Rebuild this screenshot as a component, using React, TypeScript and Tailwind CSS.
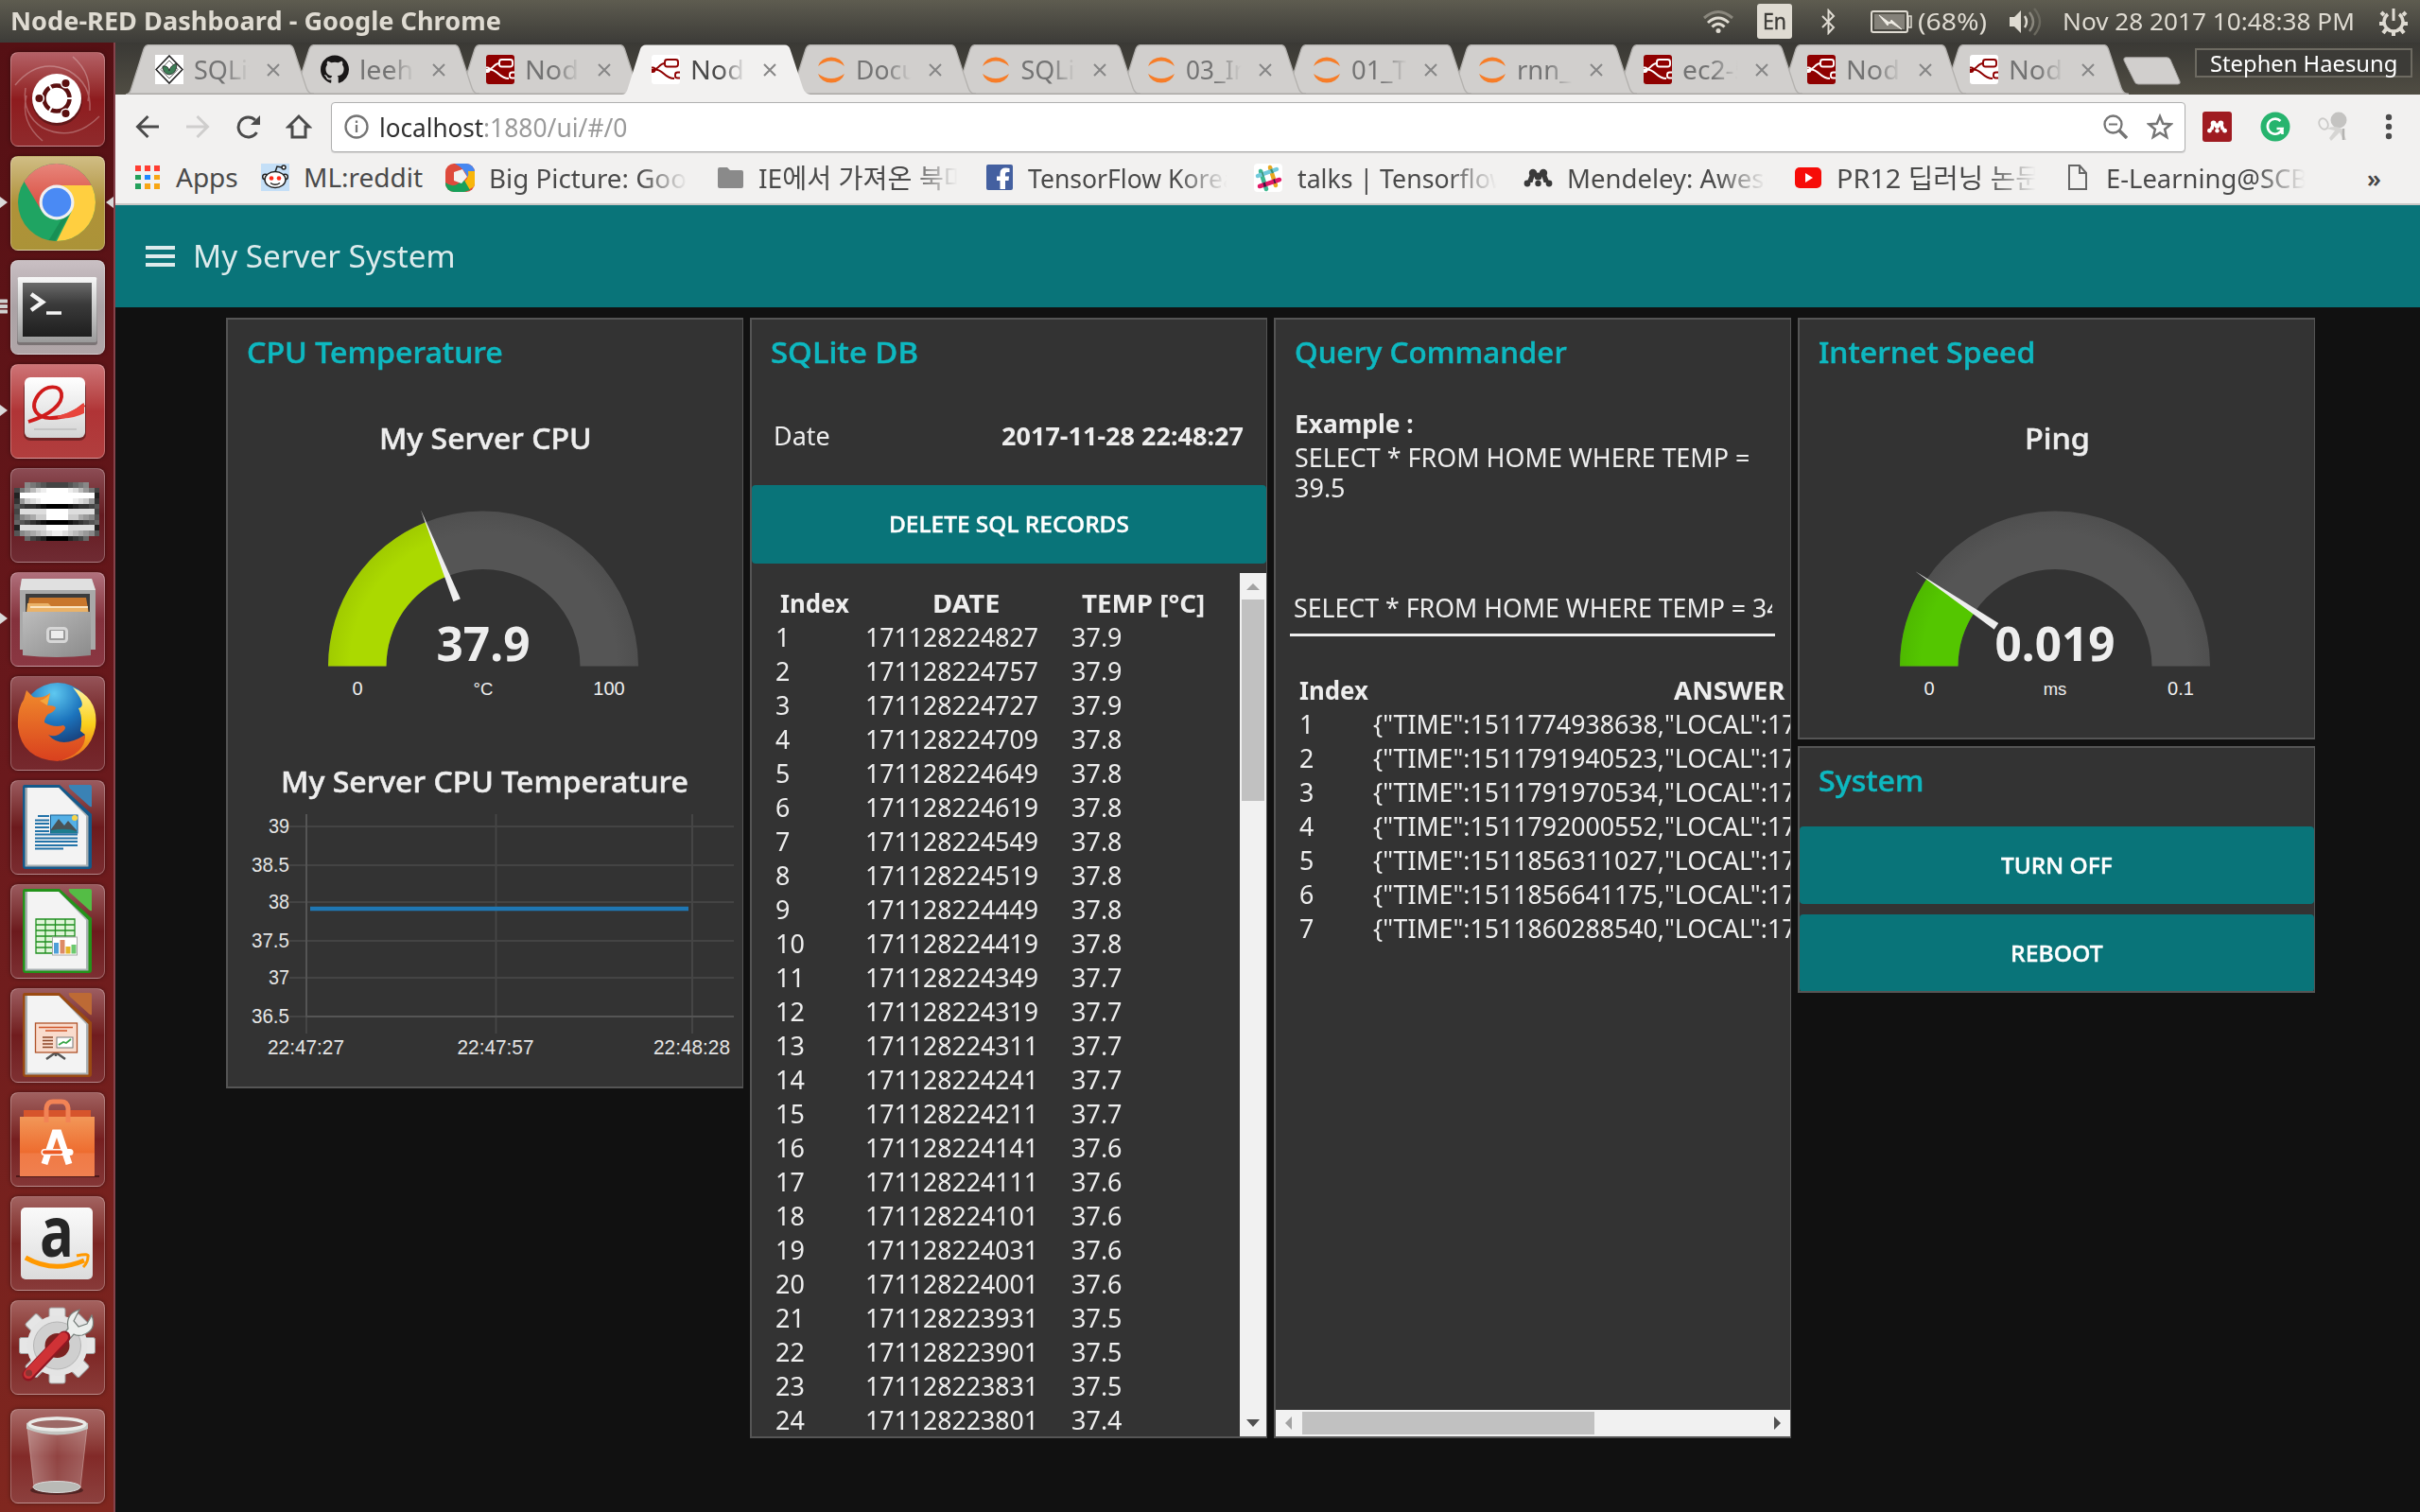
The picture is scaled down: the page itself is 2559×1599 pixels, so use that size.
import { useLayoutEffect, useRef, useState } from "react";
import type { ReactNode } from "react";

/* Single line of text condensed or widened to an exact advance width. */
function Fit({ w, className = "", children }: { w: number; className?: string; children: ReactNode }) {
  const ref = useRef<HTMLSpanElement>(null);
  const [scale, setScale] = useState(1);
  useLayoutEffect(() => {
    const el = ref.current;
    if (el && el.offsetWidth > 0) setScale(w / el.offsetWidth);
  }, [w]);
  return (
    <span className={`inline-block shrink-0 whitespace-nowrap text-left leading-tight ${className}`} style={{ width: w }}>
      <span ref={ref} className="inline-block origin-left" style={{ transform: `scaleX(${scale})` }}>
        {children}
      </span>
    </span>
  );
}

/* ---------- system panel ---------- */

function TopPanel() {
  return (
    <header className="flex h-[45px] shrink-0 items-center bg-linear-to-b from-[#5e5c50] to-[#3d3c38] pr-[13px] pl-[11px] text-[#dfdbd2]">
      <Fit w={519} className="text-[26px] font-bold">Node-RED Dashboard - Google Chrome</Fit>
      <svg className="ml-auto h-[26px] w-[34px]" viewBox="0 0 34 26" fill="none" stroke="#dfdbd2" strokeWidth="3">
        <path d="M2 9Q17 -4 32 9" stroke="#8a877d" />
        <path d="M6 14Q17 4 28 14" />
        <path d="M10.5 18.500Q17 12 23.500 18.500" />
        <circle cx="17" cy="22.500" r="2.500" fill="#dfdbd2" stroke="none" />
      </svg>
      <div className="ml-6 flex h-[37px] w-[37px] items-center justify-center rounded-[3px] bg-[#dfdbd2] text-[#3d3c38]">
        <Fit w={25} className="text-[23px] [-webkit-text-stroke:0.4px]">En</Fit>
      </div>
      <svg className="ml-[31px] h-[28px] w-[15px]" viewBox="0 0 15 28" fill="none" stroke="#dfdbd2" strokeWidth="2">
        <path d="M1 8L13 20L7.500 26V2L13 8L1 20" />
      </svg>
      <svg className="ml-[37px] h-[24px] w-[44px]" viewBox="0 0 44 24">
        <rect x="1" y="1" width="38" height="22" rx="2" fill="none" stroke="#dfdbd2" strokeWidth="2" />
        <rect x="4" y="4" width="32" height="16" fill="#85827a" />
        <path d="M40 6h3v12h-3z" fill="none" stroke="#dfdbd2" strokeWidth="1.500" />
        <path d="M9 5L21 14L22 10L33 20L20 12L18 16Z" fill="#f1eee6" stroke="#f1eee6" />
      </svg>
      <Fit w={73} className="ml-1.5 text-[26px]">(68%)</Fit>
      <svg className="ml-6 h-[32px] w-[35px]" viewBox="0 0 35 32" fill="none" strokeWidth="2.400">
        <path d="M0 11h5l7-7v24l-7-7H0z" fill="#dfdbd2" />
        <path d="M16 10q4 6 0 12" stroke="#dfdbd2" />
        <path d="M21 6q8 10 0 20" stroke="#8a877d" />
        <path d="M26 2q12 14 0 28" stroke="#6b695f" />
      </svg>
      <Fit w={309} className="ml-[21px] text-[26px]">Nov 28 2017 10:48:38 PM</Fit>
      <svg className="ml-[26px] h-[32px] w-[30px]" viewBox="0 0 30 32" fill="none" stroke="#dfdbd2">
        <path d="M9 8A10 10 0 1 0 21 8" strokeWidth="3.500" />
        <path d="M15 2V15" strokeWidth="3" />
        <path d="M5 9L2 6M25 9L28 6M4 18H0M26 18H30M7 24L4 28M23 24L26 28M15 26V31" strokeWidth="4" />
      </svg>
    </header>
  );
}

/* ---------- launcher ---------- */

function DashIcon() {
  return (
    <>
      <g fill="none" stroke="#ffffff" strokeOpacity=".28" strokeWidth="1.500">
        <path d="M5 35Q30 5 62 20Q86 34 84 62M66 5Q88 24 82 52" />
        <path d="M94 68Q66 96 34 80Q12 66 16 38M34 94Q10 74 17 46" />
      </g>
      <circle cx="49.500" cy="51.500" r="26.500" fill="#000000" opacity=".3" />
      <circle cx="49" cy="49" r="26" fill="#fff" />
      <circle cx="49" cy="49" r="13.500" fill="none" stroke="#5b1010" strokeWidth="4.500" />
      <path d="M49 49H68M49 49L39.500 32.500M49 49L39.500 65.500" stroke="#fff" strokeWidth="2.200" />
      <circle cx="49" cy="49" r="10.500" fill="#fff" />
      <g fill="#5b1010" stroke="#fff" strokeWidth="1.500">
        <circle cx="30.500" cy="49" r="4.800" />
        <circle cx="58.500" cy="33" r="4.800" />
        <circle cx="58.500" cy="65" r="4.800" />
      </g>
    </>
  );
}

function ChromeIcon() {
  return (
    <>
      <clipPath id="chromeDisc"><circle cx="49" cy="49" r="41" /></clipPath>
      <linearGradient id="chromeRed" x2="0" y2="1"><stop stopColor="#e98a80" /><stop offset="1" stopColor="#d74a3c" /></linearGradient>
      <g clipPath="url(#chromeDisc)">
        <rect x="8" y="8" width="82" height="82" fill="#1fa462" />
        <path d="M48 92L65 58L49 31H92V92Z" fill="#ffcf40" />
        <path d="M49 31H92V4H4L14.500 27L33 58Z" fill="url(#chromeRed)" />
        <path d="M62 62L46 92L40 90L54 67Z" fill="#0b6b3b" opacity=".35" />
      </g>
      <circle cx="49" cy="49" r="18.500" fill="#f0f0f0" />
      <circle cx="49" cy="49" r="15.300" fill="#4a8af4" />
    </>
  );
}

function TerminalIcon() {
  return (
    <>
      <linearGradient id="frame" x2="0" y2="1"><stop stopColor="#f7f7f7" /><stop offset="1" stopColor="#9a9a9a" /></linearGradient>
      <linearGradient id="screen" x2="0" y2="1"><stop stopColor="#6a6a6a" /><stop offset=".4" stopColor="#3a3a3a" /><stop offset="1" stopColor="#1e1e1e" /></linearGradient>
      <rect x="7" y="19" width="85" height="71" rx="3" opacity=".3" />
      <rect x="7.500" y="18" width="84" height="69" rx="2" fill="url(#frame)" />
      <rect x="13" y="24" width="73" height="57" fill="url(#screen)" />
      <path d="M22 36L34 44.500L22 53" fill="none" stroke="#f4f4f4" strokeWidth="4.500" />
      <path d="M38 56H54" stroke="#f4f4f4" strokeWidth="3.500" />
    </>
  );
}

function ReaderIcon() {
  return (
    <>
      <linearGradient id="paper" x2="0" y2="1"><stop stopColor="#fff" /><stop offset="1" stopColor="#d4d4d4" /></linearGradient>
      <rect x="14" y="18" width="66" height="63" rx="7" opacity=".35" />
      <rect x="15" y="14" width="64" height="64" rx="6" fill="url(#paper)" />
      <path d="M19 61C42 54 56 42 54 31C52 22 38 22 30 32C18 48 30 58 44 57C58 57 68 52 78 43" fill="none" stroke="#cf1b1b" strokeWidth="3.800" />
      <path d="M50 55Q68 50 78 41V52Q64 59 50 57Z" fill="#e8453c" />
      <path d="M25 69H70" stroke="#c4c4c4" strokeWidth="2" />
    </>
  );
}

const pixelRows = ["..876544", "479bdeff", "2fffffff", "39cdefff", "54332100", "4dddddff", "589accff", "65432100", "2dddddff", "589abcde", "..643200"];

function PixelIcon() {
  return (
    <g shapeRendering="crispEdges">
      {pixelRows.flatMap((row, y) =>
        (row + row.split("").reverse().join("")).split("").map((v, x) =>
          v === "." ? null : <rect key={`${x}-${y}`} x={4 + x * 5.65} y={15 + y * 5.65} width="5.700" height="5.700" fill={`#${v}${v}${v}`} />,
        ),
      )}
    </g>
  );
}

function FilesIcon() {
  return (
    <>
      <linearGradient id="drawer" x2="1" y2="1"><stop stopColor="#bcbcbc" /><stop offset="1" stopColor="#8b8b8b" /></linearGradient>
      <path d="M12 7H86L90 19V82H10V19Z" fill="#a9a9a9" />
      <path d="M12 7H86L90 19H10Z" fill="#e0e0e0" />
      <rect x="16" y="23" width="68" height="20" fill="#3c3c3c" />
      <path d="M20 27H80L83 44H17Z" fill="#c9772c" />
      <path d="M18 33H40L43 36H82V44H17Z" fill="#eab268" />
      <path d="M21 37H82" stroke="#fff3dc" strokeWidth="1.500" />
      <path d="M13 42H85V88Q49 92 13 88Z" fill="url(#drawer)" />
      <rect x="39.500" y="59.500" width="20" height="14" rx="3" fill="#9a9a9a" stroke="#d6d6d6" strokeWidth="3" />
      <rect x="43" y="62" width="13" height="8" fill="#ededed" />
    </>
  );
}

function FirefoxIcon() {
  return (
    <>
      <radialGradient id="globe" cx=".45" cy=".15" r=".9"><stop stopColor="#5ec8f0" /><stop offset=".45" stopColor="#1c74bd" /><stop offset="1" stopColor="#152458" /></radialGradient>
      <linearGradient id="fox" x2="0" y2="1"><stop stopColor="#f08a2c" /><stop offset="1" stopColor="#d9401e" /></linearGradient>
      <linearGradient id="tail" x2="0" y2="1"><stop stopColor="#fff3a0" /><stop offset=".5" stopColor="#fbd01b" /><stop offset="1" stopColor="#e8641e" /></linearGradient>
      <circle cx="50" cy="45" r="38" fill="url(#globe)" />
      <path d="M66 12Q94 24 90 54Q84 84 52 90Q78 76 79 62L74 58Q77 44 72 34Q82 32 66 12Z" fill="url(#tail)" />
      <path d="M17 15L24 22Q34 24 42 18L39 31Q48 31 48 34Q45 39 40 40Q36 44 36 49Q46 55 56 52Q60 54 56 58Q48 66 40 62Q54 78 79 62Q80 82 50 90Q12 88 8 54Q7 34 14 25Z" fill="url(#fox)" />
      <path d="M42 18L39 31L31 26Q38 24 42 18Z" fill="#f5a63c" />
    </>
  );
}

function DocIcon({ edge, light, children }: { edge: string; light: string; children: ReactNode }) {
  return (
    <>
      <path d="M15 5H52L86 36V91Q86 94 83 94H16Q13 94 13 91V8Q13 5 15 5Z" fill={edge} />
      <path d="M15.500 8H51L82.500 38V91.500H15.500Z" fill="#a9b0b3" />
      <path d="M18 8H51L80 38V89.500H18Z" fill="#f3f3f3" />
      <path d="M62 5H84Q86 5 86 7V28Q85 29 83 27L63 9Q61 6 62 5Z" fill={light} />
      {children}
    </>
  );
}

function WriterIcon() {
  return (
    <DocIcon edge="#14598a" light="#3a82b5">
      <path d="M29 38H41M26 42.500H41M26 46H41M26 50H41M26 54H41M26 57.500H71M26 61.500H71M26 65H71M26 69H71M26 72.500H56" stroke="#2273a8" strokeWidth="1.900" />
      <rect x="42.500" y="37" width="28.500" height="19" fill="#54b0e6" stroke="#155f94" />
      <path d="M43 52L51 41L57 48L61 43L70 53V56H43Z" fill="#4a5356" />
      <path d="M43 53Q60 50 70 54V56H43Z" fill="#1c7d8e" />
      <circle cx="68" cy="40" r="3" fill="#f8d347" />
    </DocIcon>
  );
}

function CalcIcon() {
  return (
    <DocIcon edge="#23931a" light="#54bd45">
      <rect x="27" y="37" width="41" height="36" fill="#dff5d8" />
      <path d="M27 37H68V73H27ZM27 43H68M27 49H68M27 55H68M27 61H68M27 67H68M37 37V73M47.500 37V73M58 37V73" fill="none" stroke="#1f8f1f" strokeWidth="1.300" />
      <rect x="44.500" y="56" width="26" height="19" fill="#fff" stroke="#a8a8a8" />
      <rect x="46" y="62" width="5" height="11.500" fill="#4f9fd8" />
      <rect x="52.500" y="59" width="5" height="14.500" fill="#dd8a66" />
      <rect x="58.500" y="66" width="5" height="7.500" fill="#e3b428" />
      <rect x="64.500" y="64" width="5" height="9.500" fill="#6cc96f" />
    </DocIcon>
  );
}

function ImpressIcon() {
  return (
    <DocIcon edge="#9a4a12" light="#bd6a35">
      <path d="M48 68L38 75M48 68L58 75M48 68V72" stroke="#555" strokeWidth="2.500" />
      <rect x="26.500" y="37" width="44" height="31" fill="#f9dccd" stroke="#b0532a" strokeWidth="1.300" />
      <path d="M30 41.500H66M37 45H60" stroke="#d0552a" strokeWidth="1.600" />
      <path d="M34 52H45M34 55.500H45M34 59H45M34 62.500H45" stroke="#8d4627" strokeWidth="1.300" />
      <rect x="49" y="52" width="17" height="11" fill="#fff" stroke="#777" />
      <path d="M51 60L56 57L59 58L64 54" fill="none" stroke="#3aa648" strokeWidth="1.800" />
    </DocIcon>
  );
}

function SoftwareIcon() {
  return (
    <>
      <linearGradient id="bag" x2="0" y2="1"><stop stopColor="#f29758" /><stop offset=".6" stopColor="#ee6c2f" /><stop offset=".62" stopColor="#f07a45" /><stop offset="1" stopColor="#f08050" /></linearGradient>
      <path d="M6 89H94" stroke="#2a0808" strokeWidth="2" opacity=".6" />
      <path d="M14 19H85V28H14Z" fill="#d6552c" />
      <rect x="10" y="26" width="79" height="63" fill="url(#bag)" />
      <path d="M38 32V17Q39 10 45 10H54Q60 10 61 17V32" fill="none" stroke="#f28355" strokeWidth="5" />
      <g fill="none" stroke="#fff" strokeWidth="7">
        <path d="M36 76L47 43H51L62 76" />
        <path d="M36 63.500H63" strokeLinecap="round" />
      </g>
      <path d="M36 63.500H53" stroke="#ec5a24" strokeWidth="4" strokeLinecap="round" />
    </>
  );
}

function AmazonIcon() {
  return (
    <>
      <linearGradient id="amz" x2="0" y2="1"><stop stopColor="#fafafa" /><stop offset="1" stopColor="#dcdcdc" /></linearGradient>
      <rect x="11" y="12" width="76" height="76" rx="5" fill="url(#amz)" />
      <text x="49" y="64" textAnchor="middle" fontFamily="Open Sans" fontWeight="700" fontSize="74" fill="#262626" textLength="36" lengthAdjust="spacingAndGlyphs">a</text>
      <path d="M16 65Q46 82 78 68" fill="none" stroke="#ff9900" strokeWidth="5" />
      <path d="M70 63Q84 60 82 64Q82 70 77 75" fill="none" stroke="#ff9900" strokeWidth="3" />
    </>
  );
}

function SettingsIcon() {
  return (
    <>
      <g fill="#e6e6e6" stroke="#9c9c9c">
        {[0, 45, 90, 135].map((a) => (
          <rect key={a} x="41" y="8" width="17" height="80" rx="2" transform={`rotate(${a} 49.500 48)`} />
        ))}
      </g>
      <circle cx="49.500" cy="48" r="32" fill="#e4e4e4" />
      <circle cx="49.500" cy="48" r="25" fill="#cfcfcf" stroke="#b5b5b5" />
      <circle cx="49.500" cy="48" r="13" fill="#7b2220" />
      <path d="M54 38L61 30Q58 14 73 10L67 22L72 28L81 25L86 16Q92 32 76 37Q70 38 67 36L60 44Z" fill="#ecefed" stroke="#77807c" strokeWidth="1.200" />
      <path d="M57 39L19 79" stroke="#8f1622" strokeWidth="13" strokeLinecap="round" />
      <path d="M56 39L19 78" stroke="#cf3236" strokeWidth="10" strokeLinecap="round" />
      <circle cx="19.500" cy="77" r="3.500" fill="#8a3432" />
    </>
  );
}

function TrashIcon() {
  return (
    <>
      <linearGradient id="bin"><stop stopColor="#fff" stopOpacity=".35" /><stop offset=".5" stopColor="#fff" stopOpacity=".12" /><stop offset="1" stopColor="#fff" stopOpacity=".25" /></linearGradient>
      <ellipse cx="49" cy="86" rx="28" ry="5" opacity=".4" />
      <path d="M18 20L25 83Q49 92 74 83L81 20Z" fill="url(#bin)" stroke="#d9b9b6" strokeOpacity=".5" />
      <ellipse cx="49" cy="82.500" rx="25" ry="6" fill="#b9bab6" stroke="#dcdcdc" />
      <path d="M17 15Q49 2 82 15V21Q49 34 17 21Z" fill="#c4c6c2" />
      <ellipse cx="49.500" cy="16" rx="29.500" ry="6" fill="#9c6966" stroke="#e9ebe8" strokeWidth="3.500" />
    </>
  );
}

const tiles: { icon: () => ReactNode; tint: string; mark?: "one" | "many"; active?: boolean }[] = [
  { icon: DashIcon, tint: "from-[#b46066] via-[#8e1b1e] to-[#8f2a2c]" },
  { icon: ChromeIcon, tint: "from-[#d0bd84] via-[#b09238] to-[#ab9338]", mark: "one", active: true },
  { icon: TerminalIcon, tint: "from-[#c9bfc3] via-[#aba2a5] to-[#b0a6a8]", mark: "many" },
  { icon: ReaderIcon, tint: "from-[#cd7376] via-[#b03436] to-[#b13e3e]", mark: "one" },
  { icon: PixelIcon, tint: "from-[#8c4c54] via-[#651a20] to-[#6f2b33]" },
  { icon: FilesIcon, tint: "from-[#b0707c] via-[#84313c] to-[#8a3742]", mark: "one" },
  { icon: FirefoxIcon, tint: "from-[#955358] via-[#6e1c20] to-[#76292e]" },
  { icon: WriterIcon, tint: "from-[#9a5a5e] via-[#6c1a1d] to-[#7a2c30]" },
  { icon: CalcIcon, tint: "from-[#9a5a5e] via-[#6c1a1d] to-[#7c2f32]" },
  { icon: ImpressIcon, tint: "from-[#9c5c60] via-[#701c1e] to-[#7e3032]" },
  { icon: SoftwareIcon, tint: "from-[#a0605f] via-[#761f20] to-[#843636]" },
  { icon: AmazonIcon, tint: "from-[#a26260] via-[#7a2422] to-[#883a39]" },
  { icon: SettingsIcon, tint: "from-[#a4625f] via-[#7d2523] to-[#8a3c3a]" },
  { icon: TrashIcon, tint: "from-[#a86a68] via-[#822a28] to-[#8c403e]" },
];

function Launcher() {
  return (
    <nav className="flex w-[122px] shrink-0 flex-col gap-[10px] border-r-2 border-[#85434b] bg-linear-to-b from-[#551014] via-[#6a191c] to-[#80271f] pt-[10px]">
      {tiles.map(({ icon: Icon, tint, mark, active }, i) => (
        <div key={i} className="relative flex h-[100px] shrink-0 justify-center last:mt-[5px]">
          {mark === "one" && (
            <svg className="absolute top-[43px] left-0 h-[12px] w-[8px]" viewBox="0 0 8 12"><path d="M0 0L8 6L0 12Z" fill="#d9d9d9" /></svg>
          )}
          {mark === "many" && (
            <svg className="absolute top-[41px] left-0 h-[16px] w-[8px]" viewBox="0 0 8 16"><path d="M0 2.500H7M0 8H7M0 13.500H7" stroke="#d0d0d0" strokeWidth="4" strokeLinecap="round" /></svg>
          )}
          {active && (
            <svg className="absolute top-[43px] right-0 h-[12px] w-[8px]" viewBox="0 0 8 12"><path d="M8 0L0 6L8 12Z" fill="#d9d9d9" /></svg>
          )}
          <div className={`ml-[1px] h-[100px] w-[100px] overflow-hidden rounded-[8px] border border-[#ffffff44] bg-linear-to-b shadow-[0_0_4px_#00000066] ${tint}`}>
            <svg className="-m-px h-[100px] w-[100px]" viewBox="0 0 100 100"><Icon /></svg>
          </div>
        </div>
      ))}
    </nav>
  );
}

/* ---------- browser chrome ---------- */

function NodeRed({ inverted = false }: { inverted?: boolean }) {
  const line = inverted ? "#8f0000" : "#fff";
  return (
    <svg className="h-[31px] w-[30px]" viewBox="0 0 30 31" fill="none" stroke={line} strokeWidth="1.900">
      <rect width="30" height="31" rx="3" fill={inverted ? "#fff" : "#8f0000"} stroke="none" />
      <rect x="14" y="5" width="14" height="7.500" rx="2.500" />
      <path d="M14 9C7 9 9 16 0 16M3 15.500C13 15 13 25 24 25M0 13.500H1.500Q3.500 13.500 3.500 16Q3.500 18 1.500 18H0" />
      <path d="M30 18.500H27.500Q25 18.500 25 21V22.500Q25 24.500 27.500 24.500H30" />
    </svg>
  );
}

function Jupyter() {
  return (
    <svg className="h-[31px] w-[30px]" viewBox="0 0 30 31" fill="#f77d28">
      <path d="M1 12A14.500 13 0 0 1 29 12Q15 1 1 12Z" />
      <path d="M1 20A14.500 13 0 0 0 29 20Q15 30 1 20Z" />
    </svg>
  );
}

function SqliteFav() {
  return (
    <svg className="h-[31px] w-[30px]" viewBox="0 0 30 31">
      <rect width="30" height="31" fill="#fff" />
      <path d="M15 1L29 15.500L15 30L1 15.500Z" fill="none" stroke="#222" strokeWidth="1.600" />
      <path d="M15 6L24 15.500L15 25L6 15.500Z" fill="none" stroke="#666" />
      <path d="M8 12Q14 11 15 17Q16 11 23 9Q23 20 15 21Q8 20 8 12Z" fill="#3c7d55" stroke="#222" strokeWidth=".8" />
    </svg>
  );
}

function GithubFav() {
  return (
    <svg className="h-[31px] w-[30px]" viewBox="0 0 16 16">
      <path fill="#191717" d="M8 0C3.580 0 0 3.580 0 8c0 3.540 2.290 6.530 5.470 7.590.4.070.55-.17.55-.38 0-.19-.01-.82-.01-1.490-2.010.37-2.530-.49-2.690-.94-.09-.23-.48-.94-.82-1.130-.28-.15-.68-.52-.01-.53.63-.01 1.080.58 1.230.82.72 1.210 1.870.87 2.330.66.070-.52.28-.87.51-1.070-1.780-.2-3.640-.89-3.640-3.950 0-.87.31-1.590.82-2.150-.08-.2-.36-1.020.08-2.120 0 0 .67-.21 2.200.82.64-.18 1.320-.27 2-.27s1.360.09 2 .27c1.530-1.040 2.200-.82 2.200-.82.44 1.100.16 1.920.08 2.120.51.56.82 1.270.82 2.150 0 3.070-1.870 3.750-3.650 3.950.29.25.54.73.54 1.480 0 1.070-.01 1.930-.01 2.200 0 .21.15.46.55.38A8.010 8.010 0 0 0 16 8c0-4.420-3.580-8-8-8" />
    </svg>
  );
}

const tabs: { title: string; w: number; fav: ReactNode; active?: boolean }[] = [
  { title: "SQLit", w: 67, fav: <SqliteFav /> },
  { title: "leeha", w: 73, fav: <GithubFav /> },
  { title: "Node-", w: 82, fav: <NodeRed /> },
  { title: "Node-", w: 82, fav: <NodeRed inverted />, active: true },
  { title: "Docu", w: 65, fav: <Jupyter /> },
  { title: "SQLit", w: 67, fav: <Jupyter /> },
  { title: "03_In", w: 67, fav: <Jupyter /> },
  { title: "01_Tu", w: 74, fav: <Jupyter /> },
  { title: "rnn_s", w: 70, fav: <Jupyter /> },
  { title: "ec2-5", w: 71, fav: <NodeRed /> },
  { title: "Node-", w: 82, fav: <NodeRed /> },
  { title: "Node-", w: 82, fav: <NodeRed inverted /> },
];

function TabStrip() {
  return (
    <div className="relative z-0 flex h-[55px] shrink-0 bg-linear-to-b from-[#3a3935] to-[#504d43] pt-[2px] pl-[11px]">
      {tabs.map((t, i) => (
        <div key={i} className={`relative flex h-[53px] shrink-0 items-center pl-[31px] ${i < 9 ? "w-[174.900px]" : "w-[172.700px]"}`} style={{ zIndex: t.active ? 30 : 20 - i }}>
          <svg className="absolute top-0 left-0 -z-10 h-[53px] w-[200px]" viewBox="0 0 200 53">
            <path
              d="M0 53C3 53 5 50 6 46L19 5Q20.500 .5 25 .5H172Q176 .5 177.500 5L191 46Q193 52 199 53Z"
              fill={t.active ? "#f2f1f0" : "#d1cfcd"}
              stroke={t.active ? "none" : "#b3b1ae"}
              strokeWidth="1.300"
            />
            {!t.active && <path d="M4 52.300H199" stroke="#aaa8a5" strokeWidth="1.400" />}
          </svg>
          {t.fav}
          <div className="ml-[11px] w-[61px] overflow-hidden [mask-image:linear-gradient(to_right,black_52%,transparent_96%)]">
            <Fit w={t.w} className={t.active ? "text-[27px] text-[#4a4a4a]" : "text-[27px] text-[#737373]"}>{t.title}</Fit>
          </div>
          <svg className="ml-[16px] h-[14px] w-[14px]" viewBox="0 0 14 14"><path d="M1 1L13 13M13 1L1 13" stroke="#868686" strokeWidth="2" /></svg>
        </div>
      ))}
      <svg className="mt-[13px] ml-[20px] h-[30px] w-[62px] shrink-0" viewBox="0 0 62 30">
        <path d="M3 .7H46Q49 .7 50 3L60 26Q61 29 58 29H16Q13 29 12 26L1 4Q0 .7 3 .7Z" fill="#d1cfcd" stroke="#a3a19e" />
      </svg>
      <div className="mt-[4px] ml-[14px] flex h-[31px] w-[230px] shrink-0 items-center justify-center border-2 border-[#6d6a61] bg-[#3c3b37] text-white">
        <Fit w={198} className="text-[24px]">Stephen Haesung</Fit>
      </div>
    </div>
  );
}

function MendeleyMark({ fill }: { fill: string }) {
  return (
    <svg className="h-full w-full" viewBox="0 0 30 20" fill={fill}>
      <circle cx="9.500" cy="5" r="4.200" /><circle cx="20.500" cy="5" r="4.200" /><circle cx="15" cy="8.500" r="4" />
      <circle cx="3.500" cy="16" r="3.400" /><circle cx="15" cy="16" r="3.200" /><circle cx="26.500" cy="16" r="3.400" />
      <path d="M7 5H12L9 15H3ZM18 5H23L27 15H21ZM12 9H18L16.500 11H13.500Z" />
    </svg>
  );
}

function Toolbar() {
  return (
    <div className="flex h-[68px] shrink-0 items-center bg-[#f2f1f0] pl-[21px]">
      <svg className="h-[26px] w-[26px]" viewBox="0 0 26 26" fill="none" stroke="#4b4b4b" strokeWidth="3"><path d="M25 13H3M13.500 2L2.500 13L13.500 24" /></svg>
      <svg className="ml-[27px] h-[26px] w-[26px]" viewBox="0 0 26 26" fill="none" stroke="#cfcecd" strokeWidth="3"><path d="M1 13H23M12.500 2L23.500 13L12.500 24" /></svg>
      <svg className="ml-[27px] h-[26px] w-[28px]" viewBox="0 0 28 26" fill="none" stroke="#4b4b4b" strokeWidth="3"><path d="M22.500 19A10.500 10.500 0 1 1 21 6" /><path d="M26 1V11H16Z" fill="#4b4b4b" stroke="none" /></svg>
      <svg className="ml-[25px] h-[28px] w-[28px]" viewBox="0 0 28 28" fill="none" stroke="#4b4b4b" strokeWidth="3"><path d="M3 14L14 3L25 14H21V25H7V14Z" /></svg>
      <div className="ml-[20px] flex h-[53px] w-[1961px] shrink-0 items-center rounded-[4px] border border-[#b0b0b0] bg-white pl-[13px] pr-[12px] shadow-[0_1px_1px_#00000022]">
        <svg className="h-[26px] w-[26px]" viewBox="0 0 26 26" fill="none" stroke="#757575" strokeWidth="2.300"><circle cx="13" cy="13" r="11.500" /><path d="M13 11V19M13 6.500V9" /></svg>
        <Fit w={110} className="ml-[11px] text-[28px] text-[#303030]">localhost</Fit>
        <Fit w={152} className="text-[28px] text-[#9a9a9a]">:1880/ui/#/0</Fit>
        <svg className="ml-auto h-[26px] w-[26px]" viewBox="0 0 26 26" fill="none" stroke="#757575" strokeWidth="2.300"><circle cx="10.500" cy="10.500" r="9" /><path d="M6 10.500H15" strokeWidth="2" /><path d="M17 17L25 25" strokeWidth="3.500" /></svg>
        <svg className="ml-[20px] h-[28px] w-[28px]" viewBox="0 0 28 28" fill="none" stroke="#757575" strokeWidth="2.500"><path d="M14 3L17.200 10.800L25.500 11.400L19.100 16.800L21.200 25L14 20.500L6.800 25L8.900 16.800L2.500 11.400L10.800 10.800Z" /></svg>
      </div>
      <div className="ml-[18px] flex h-[32px] w-[31px] items-center rounded-[3px] bg-[#9f1b21] px-[5px]"><MendeleyMark fill="#fff" /></div>
      <svg className="ml-[30px] h-[32px] w-[32px]" viewBox="0 0 32 32" fill="none">
        <circle cx="16" cy="16" r="15.500" fill="#27b46e" />
        <path d="M21.500 10A8 8 0 1 0 23.500 18H17.500M23.500 17V24" stroke="#fff" strokeWidth="2.600" />
      </svg>
      <svg className="ml-[29px] h-[32px] w-[32px]" viewBox="0 0 32 32" fill="none">
        <circle cx="22" cy="9" r="8.500" fill="#c4c3c1" /><ellipse cx="6" cy="13" rx="4.500" ry="6" transform="rotate(-25 6 13)" stroke="#cbcac8" strokeWidth="1.800" />
        <path d="M9 18Q18 14 25 18L30 30H27L23 22L14 31L12 28L18 20Z" fill="#d6d5d3" />
        <path d="M27 18V30" stroke="#b5b4b2" strokeWidth="2.500" />
      </svg>
      <svg className="ml-[39px] h-[28px] w-[8px]" viewBox="0 0 8 28" fill="#4b4b4b"><circle cx="4" cy="4" r="3.200" /><circle cx="4" cy="14" r="3.200" /><circle cx="4" cy="24" r="3.200" /></svg>
    </div>
  );
}

function Bookmark({ icon, w, clip, className, children }: { icon: ReactNode; w: number; clip?: boolean; className: string; children: ReactNode }) {
  return (
    <div className={`flex shrink-0 items-center text-[28px] text-[#4a4a4a] ${className}`}>
      {icon}
      {clip ? (
        <div className="w-[215px] overflow-hidden [mask-image:linear-gradient(to_right,black_74%,transparent_98%)]"><Fit w={w}>{children}</Fit></div>
      ) : (
        <Fit w={w}>{children}</Fit>
      )}
    </div>
  );
}

const appDots = ["#ff3d32", "#ff3d32", "#ff3d32", "#23a05a", "#1e88ff", "#f7a613", "#23a05a", "#f7a613", "#f7a613"];

function Bookmarks() {
  return (
    <div className="flex h-[49px] shrink-0 items-center overflow-hidden border-b-2 border-[#c9c7c5] bg-[#f2f1f0] pl-[21px] pb-[8px]">
      <Bookmark className="" w={66} icon={
        <div className="mr-[17px] grid h-[25px] w-[26px] grid-cols-3 gap-[4px]">{appDots.map((c, i) => <span key={i} style={{ background: c }} />)}</div>
      }>Apps</Bookmark>
      <Bookmark className="ml-[24px]" w={126} icon={
        <svg className="mr-[15px] h-[29px] w-[30px]" viewBox="0 0 30 29">
          <rect width="30" height="29" fill="#c4dff7" />
          <g fill="#fff" stroke="#222" strokeWidth="1.500"><path d="M15 9L17 3L22 4" fill="none" /><circle cx="24" cy="4" r="2" /><circle cx="4.500" cy="14" r="2.800" /><circle cx="25.500" cy="14" r="2.800" /><ellipse cx="15" cy="17" rx="11" ry="8.500" /><path d="M10 20.500Q15 24 20 20.500" fill="none" /></g>
          <circle cx="11" cy="15.500" r="2.300" fill="#ff2a1a" /><circle cx="19" cy="15.500" r="2.300" fill="#ff2a1a" />
        </svg>
      }>ML:reddit</Bookmark>
      <Bookmark clip className="ml-[24px]" w={226} icon={
        <svg className="mr-[15px] h-[30px] w-[31px]" viewBox="0 0 31 30">
          <clipPath id="swirl"><rect width="31" height="30" rx="9" /></clipPath>
          <g clipPath="url(#swirl)"><rect width="31" height="30" fill="#de4a3c" /><path d="M10 0H31V12L24 15Q20 5 10 0Z" fill="#4688f1" /><path d="M31 8V24L20 30L16 22Q26 16 24 8Z" fill="#f8b60a" /><path d="M0 20Q10 28 19 16L26 28L20 30H0Z" fill="#18a05a" /></g>
          <path d="M9 9L18 6L23 14L17 21L9 18Z" fill="#f2f1f0" />
        </svg>
      }>Big Picture: Goog</Bookmark>
      <Bookmark clip className="ml-[27px] [font-family:'Noto_Sans','Noto_Sans_CJK_KR',sans-serif]" w={222} icon={
        <svg className="mr-[16px] h-[22px] w-[27px]" viewBox="0 0 27 22"><path d="M2 0H10L13 3H25Q27 3 27 5V20Q27 22 25 22H2Q0 22 0 20V2Q0 0 2 0Z" fill="#8a8a8a" /></svg>
      }>IE에서 가져온 북마</Bookmark>
      <Bookmark clip className="ml-[26px]" w={221} icon={
        <svg className="mr-[16px] h-[27px] w-[28px]" viewBox="0 0 28 27"><rect width="28" height="27" rx="2" fill="#4460a0" /><path d="M20 26V17H23.500L24 12.500H20V10Q20 8 22 8H24.500V4Q14.500 2 14.500 9.500V12.500H11V17H14.500V26Z" fill="#fff" /></svg>
      }>TensorFlow Korea</Bookmark>
      <Bookmark clip className="ml-[24px]" w={224} icon={
        <svg className="mr-[16px] h-[30px] w-[30px]" viewBox="0 0 30 30" strokeWidth="4.500" strokeLinecap="round">
          <rect width="30" height="30" rx="4" fill="#fff" />
          <path d="M7 8L13 27" stroke="#3eb890" /><path d="M17 4L23 23" stroke="#e9a820" /><path d="M4 13L24 6" stroke="#70cadb" /><path d="M6 24L27 17" stroke="#e01765" /><path d="M10 22.700L12.500 22M21 19L22.500 18.500" stroke="#3a1a40" strokeLinecap="butt" /><path d="M8.500 11.500L10 11M18 8.500L20 7.500" stroke="#3c8f70" strokeLinecap="butt" />
        </svg>
      }>talks | Tensorflow</Bookmark>
      <Bookmark clip className="ml-[24px]" w={225} icon={<div className="mr-[15px] flex h-[20px] w-[31px]"><MendeleyMark fill="#3a3a3a" /></div>}>Mendeley: Aweso</Bookmark>
      <Bookmark clip className="ml-[26px] [font-family:'Noto_Sans','Noto_Sans_CJK_KR',sans-serif]" w={216} icon={
        <svg className="mr-[16px] h-[22px] w-[28px]" viewBox="0 0 28 22"><rect width="28" height="22" rx="5" fill="#f60c08" /><path d="M11 6L19 11L11 16Z" fill="#fff" /></svg>
      }>PR12 딥러닝 논문</Bookmark>
      <Bookmark clip className="ml-[30px]" w={229} icon={
        <svg className="mr-[20px] h-[27px] w-[20px]" viewBox="0 0 20 27" fill="none" stroke="#666" strokeWidth="2"><path d="M1 1H12L19 9V26H1ZM12 1V9H19" /></svg>
      }>E-Learning@SCBa</Bookmark>
      <span className="ml-[61px] text-[26px] leading-none font-semibold text-[#444]">»</span>
    </div>
  );
}

/* ---------- dashboard ---------- */

function Card({ title, w, className, children }: { title: string; w: number; className: string; children: ReactNode }) {
  return (
    <section className={`flex w-[547px] flex-col overflow-hidden border-2 border-r border-[#555] bg-[#333] text-[#eee] ${className}`}>
      <h2 className="flex h-[68px] shrink-0 items-center pl-[20px] text-[31px] font-medium text-[#0eb8c0] [-webkit-text-stroke:0.5px]">
        <Fit w={w}>{title}</Fit>
      </h2>
      {children}
    </section>
  );
}

function Gauge({ label, labelW, value, valueW, ratio, color, rim, min, max, unit, className }: {
  label: string; labelW: number; value: string; valueW: number; ratio: number; color: string; rim: string; min: string; max: string; unit: string; className: string;
}) {
  const cx = 270, cy = 184.5, R = 164, r = 102.500;
  const a = Math.PI * ratio;
  const ux = -Math.cos(a), uy = -Math.sin(a);
  const at = (len: number, side = 0) => `${cx + ux * len - uy * side} ${cy + uy * len + ux * side}`;
  const id = `gauge-${unit}`;
  return (
    <>
      <h3 className="flex h-[114px] shrink-0 items-center justify-center text-[31px] font-medium [-webkit-text-stroke:0.5px]"><Fit w={labelW}>{label}</Fit></h3>
      <svg className={`w-[544px] shrink-0 ${className}`} fill="#eee" fontFamily="Liberation Sans" fontSize="20" textAnchor="middle">
        <radialGradient id={id} gradientUnits="userSpaceOnUse" cx={cx} cy={cy} r={R}>
          <stop offset=".86" stopColor={color} /><stop offset="1" stopColor={rim} />
        </radialGradient>
        <radialGradient id={`${id}-track`} gradientUnits="userSpaceOnUse" cx={cx} cy={cy} r={R}>
          <stop offset=".86" stopColor="#555" /><stop offset="1" stopColor="#4f4f4f" />
        </radialGradient>
        <path d={`M${cx - R} ${cy}A${R} ${R} 0 0 1 ${cx + R} ${cy}H${cx + r}A${r} ${r} 0 0 0 ${cx - r} ${cy}Z`} fill={`url(#${id}-track)`} />
        <path d={`M${cx - R} ${cy}A${R} ${R} 0 0 1 ${at(R)}L${at(r)}A${r} ${r} 0 0 0 ${cx - r} ${cy}Z`} fill={`url(#${id})`} />
        <path d={`M${at(178)}L${at(75, 4)}L${at(75, -4)}Z`} />
        <text x={cx} y="179" fontFamily="Noto Sans" fontWeight="700" fontSize="50" textLength={valueW} lengthAdjust="spacingAndGlyphs">{value}</text>
        <text x="137" y="215">{min}</text>
        <text x={cx} y="215" fontSize="18.500">{unit}</text>
        <text x="403" y="215">{max}</text>
      </svg>
    </>
  );
}

const ticks: [string, number][] = [["39", 20], ["38.5", 61], ["38", 100], ["37.5", 141], ["37", 180], ["36.5", 221]];
const times: [string, number][] = [["22:47:27", 83], ["22:47:57", 283.5], ["22:48:28", 491]];

function TempChart() {
  return (
    <svg className="h-[296px] w-[544px] shrink-0" fill="#e4e4e4" fontFamily="Liberation Sans" fontSize="22.500">
      {ticks.map(([t, y]) => (
        <g key={t}>
          <path d={`M65 ${y}H535`} stroke="#444" strokeWidth="2" />
          <text x="65" y={y + 6.5} textAnchor="end" textLength={t.length > 2 ? 40 : 22} lengthAdjust="spacingAndGlyphs">{t}</text>
        </g>
      ))}
      {times.map(([t, x]) => (
        <g key={t}>
          <path d={`M${x} 7V239`} stroke="#454545" strokeWidth="2" />
          <text x={x - 0.5} y="261" textAnchor="middle" textLength="81" lengthAdjust="spacingAndGlyphs">{t}</text>
        </g>
      ))}
      <path d="M83 7V221H535" fill="none" stroke="#555" strokeWidth="2" />
      <path d="M87 107H487" stroke="#1f77b4" strokeWidth="4.600" />
    </svg>
  );
}

function Button({ w, className, children }: { w: number; className: string; children: ReactNode }) {
  return (
    <button className={`flex shrink-0 items-center justify-center rounded-[4px] bg-[#097479] text-[23px] font-medium text-white [-webkit-text-stroke:0.4px] ${className}`}>
      <Fit w={w}>{children}</Fit>
    </button>
  );
}

const records: [string, string][] = [
  ["171128224827", "37.9"], ["171128224757", "37.9"], ["171128224727", "37.9"], ["171128224709", "37.8"],
  ["171128224649", "37.8"], ["171128224619", "37.8"], ["171128224549", "37.8"], ["171128224519", "37.8"],
  ["171128224449", "37.8"], ["171128224419", "37.8"], ["171128224349", "37.7"], ["171128224319", "37.7"],
  ["171128224311", "37.7"], ["171128224241", "37.7"], ["171128224211", "37.7"], ["171128224141", "37.6"],
  ["171128224111", "37.6"], ["171128224101", "37.6"], ["171128224031", "37.6"], ["171128224001", "37.6"],
  ["171128223931", "37.5"], ["171128223901", "37.5"], ["171128223831", "37.5"], ["171128223801", "37.4"],
];

const answers = ["1511774938638", "1511791940523", "1511791970534", "1511792000552", "1511856311027", "1511856641175", "1511860288540"];

function RecordTable() {
  return (
    <div className="mt-[10px] flex h-[913px] overflow-hidden">
      <div className="flex-1 pt-[15px] pl-[24px] text-[26.500px]">
        <div className="grid h-[36px] grid-cols-[96px_218px_1fr] items-center font-bold">
          <Fit w={73} className="ml-[6px]">Index</Fit><Fit w={71} className="ml-[71px]">DATE</Fit><Fit w={130} className="ml-[11px]">TEMP [°C]</Fit>
        </div>
        {records.map(([date, temp], i) => (
          <div key={date} className="grid h-[36px] grid-cols-[96px_218px_1fr] items-center">
            <Fit w={i < 9 ? 15.2 : 30.5} className="ml-[1px]">{i + 1}</Fit><Fit w={183}>{date}</Fit><Fit w={54}>{temp}</Fit>
          </div>
        ))}
      </div>
      <div className="flex w-[28px] flex-col items-center bg-[#f1f1f1]">
        <svg className="h-[28px] w-[28px]"><path d="M7 18L14 11L21 18Z" fill="#a3a3a3" /></svg>
        <div className="h-[213px] w-[24px] bg-[#c1c1c1]" />
        <svg className="mt-auto h-[28px] w-[28px]"><path d="M7 10L14 18L21 10Z" fill="#505050" /></svg>
      </div>
    </div>
  );
}

function QueryPanel() {
  return (
    <>
      <div className="mt-[25px] pl-[20px] text-[26.500px]">
        <div className="flex h-[36px] items-center font-bold"><Fit w={126}>Example :</Fit></div>
        <div className="flex h-[35px] items-center"><Fit w={481}>SELECT * FROM HOME WHERE TEMP =</Fit></div>
        <div className="flex h-[29px] items-center"><Fit w={54}>39.5</Fit></div>
      </div>
      <div className="mt-[86px] ml-[15px] h-[56px] w-[513px] shrink-0 border-b-3 border-[#eee] pr-[3px] pl-[4px]">
        <div className="flex h-[53px] items-center overflow-hidden text-[26.500px]"><Fit w={516}>SELECT * FROM HOME WHERE TEMP = 34</Fit></div>
      </div>
      <div className="mt-[40px] overflow-hidden pl-[25px] text-[26.500px]">
        <div className="flex h-[36px] items-center font-bold"><Fit w={73}>Index</Fit><Fit w={117} className="ml-[323px]">ANSWER</Fit></div>
        {answers.map((t, i) => (
          <div key={t} className="flex h-[36px] items-center"><Fit w={15.2} className="mr-[63px]">{i + 1}</Fit><Fit w={463}>{`{"TIME":${t},"LOCAL":171`}</Fit></div>
        ))}
      </div>
      <div className="mt-auto flex h-[28px] items-center bg-[#f1f1f1]">
        <svg className="h-[28px] w-[28px]"><path d="M17 7L10 14L17 21Z" fill="#a3a3a3" /></svg>
        <div className="h-[24px] w-[309px] bg-[#c1c1c1]" />
        <svg className="ml-auto h-[28px] w-[28px]"><path d="M11 7L18 14L11 21Z" fill="#505050" /></svg>
      </div>
    </>
  );
}

function Dashboard() {
  return (
    <div className="flex flex-1 flex-col bg-[#111]">
      <div className="flex h-[108px] shrink-0 items-center bg-[#097479] pb-[1px] pl-[32px] text-[#dcebec]">
        <svg className="h-[22px] w-[31px]" viewBox="0 0 31 22"><path d="M0 2H31M0 11H31M0 20H31" stroke="#dcebec" strokeWidth="3.800" /></svg>
        <Fit w={278} className="ml-[19px] text-[33.500px]">My Server System</Fit>
      </div>
      <main className="flex items-start gap-[7px] pt-[11px] pl-[117px]">
        <Card title="CPU Temperature" w={271} className="h-[815px]">
          <Gauge label="My Server CPU" labelW={225} value="37.9" valueW={99} ratio={0.379} color="#abd900" rim="#a0cb00" min="0" max="100" unit="°C" className="h-[280px]" />
          <h3 className="flex h-[54px] shrink-0 items-center justify-center pr-[1px] pb-[1px] text-[31px] font-medium [-webkit-text-stroke:0.5px]"><Fit w={431}>My Server CPU Temperature</Fit></h3>
          <TempChart />
        </Card>
        <Card title="SQLite DB" w={156} className="h-[1185px]">
          <div className="flex h-[107px] shrink-0 items-center justify-between pt-[4px] pr-[24px] pl-[23px] text-[26.500px]">
            <Fit w={60}>Date</Fit><Fit w={256} className="font-bold">2017-11-28 22:48:27</Fit>
          </div>
          <Button w={254} className="h-[83px]">DELETE SQL RECORDS</Button>
          <RecordTable />
        </Card>
        <Card title="Query Commander" w={288} className="h-[1185px]"><QueryPanel /></Card>
        <div className="flex flex-col gap-[7px]">
          <Card title="Internet Speed" w={229} className="h-[446px]">
            <Gauge label="Ping" labelW={69} value="0.019" valueW={127} ratio={0.19} color="#54c600" rim="#4eb900" min="0" max="0.1" unit="ms" className="h-[260px]" />
          </Card>
          <Card title="System" w={112} className="h-[261px]">
            <Button w={118} className="mt-[15px] h-[82px]">TURN OFF</Button>
            <Button w={98} className="mt-[11px] h-[82px]">REBOOT</Button>
          </Card>
        </div>
      </main>
    </div>
  );
}

export default function App() {
  return (
    <div className="flex h-[1599px] w-[2559px] flex-col overflow-hidden bg-[#111] [font-family:'Noto_Sans',sans-serif]">
      <TopPanel />
      <div className="flex flex-1 overflow-hidden">
        <Launcher />
        <div className="flex min-w-0 flex-1 flex-col">
          <TabStrip />
          <Toolbar />
          <Bookmarks />
          <Dashboard />
        </div>
      </div>
    </div>
  );
}
